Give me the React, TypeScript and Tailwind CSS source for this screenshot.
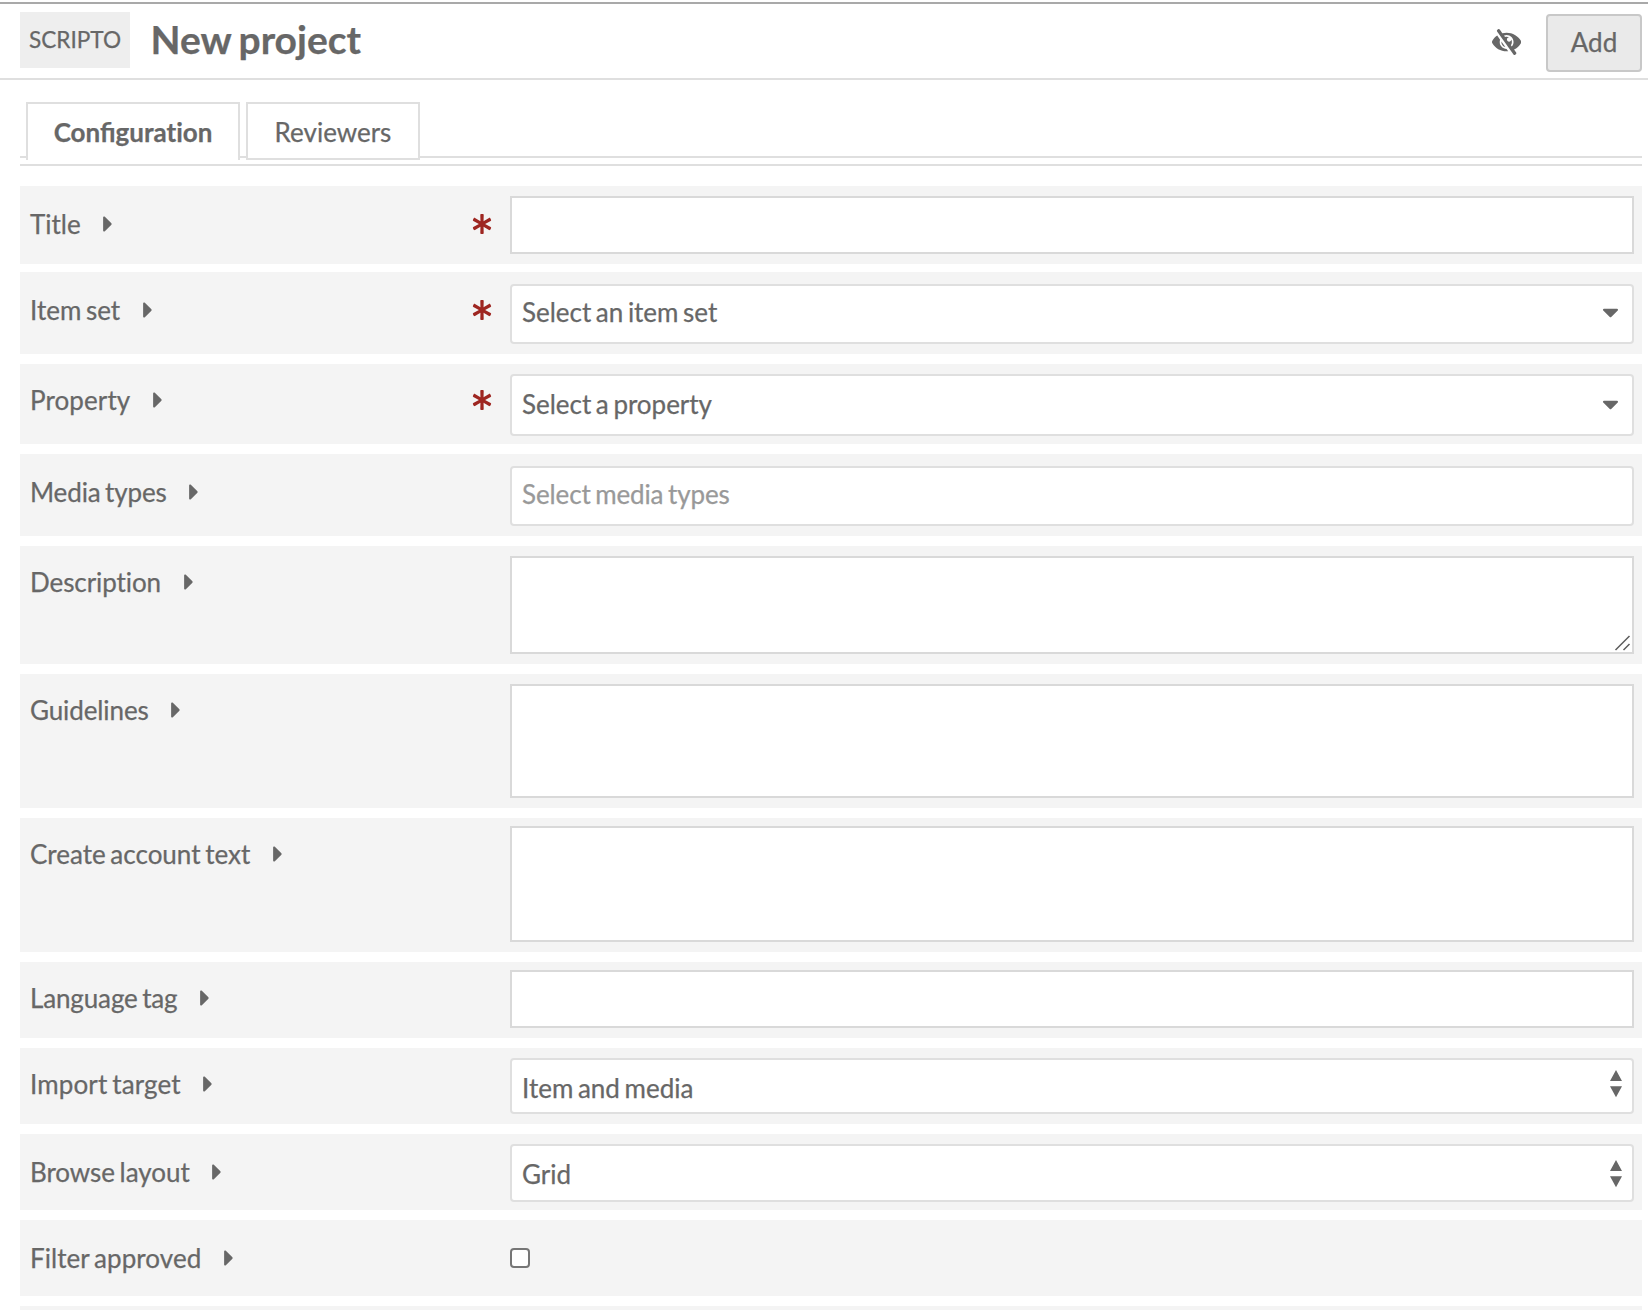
import React from "react";
import { FaAsterisk, FaCaretDown, FaCaretRight } from "react-icons/fa";

type Row = {
  label: string;
  required?: boolean;
  row: string;
  labelPad: string;
  tracking?: string;
  control: React.ReactNode;
};

function TextBox({ className, resizable }: { className: string; resizable?: boolean }) {
  return (
    <div className={`flex w-full items-end justify-end border-2 border-[#d9d9d9] bg-white ${className}`}>
      {resizable && (
        <svg width="18" height="18" viewBox="0 0 18 18" className="text-[#5c5c5c]" fill="none" stroke="currentColor" strokeWidth="1.5">
          <path d="M1.5 16 15.5 2M9.5 16 15.5 10" />
        </svg>
      )}
    </div>
  );
}

function Chosen({ text, className, arrow, muted }: { text: string; className: string; arrow?: boolean; muted?: boolean }) {
  return (
    <div className={`flex w-full items-start justify-between rounded-[4px] border-2 border-[#dfdfdf] bg-white pl-[10px] pr-[13px] ${className}`}>
      <span className={muted ? "tracking-[-0.12px] text-[#999]" : "tracking-[-0.02px]"}>{text}</span>
      {arrow && <FaCaretDown className="mt-[3px] h-[26px] w-[17px]" />}
    </div>
  );
}

function NativeSelect({ text, className, arrowPad }: { text: string; className: string; arrowPad: string }) {
  return (
    <div className={`flex w-full items-start justify-between rounded-[4px] border-2 border-[#dfdfdf] bg-white pl-[10px] pr-[10px] ${className}`}>
      <span>{text}</span>
      <span className={arrowPad}>
        <svg width="12" height="28" viewBox="0 0 12 28" fill="currentColor">
          <path d="M6 0 12 11H0ZM0 16.3H12L6 27.3Z" />
        </svg>
      </span>
    </div>
  );
}

const rows: Row[] = [
  { label: "Title", required: true, row: "h-[78px] pt-[10px]", labelPad: "mt-[12px]", control: <TextBox className="h-[58px]" /> },
  { label: "Item set", required: true, row: "mt-[8px] h-[82px] pt-[12px]", labelPad: "mt-[10px]", control: <Chosen className="h-[60px] pt-[10px]" text="Select an item set" arrow /> },
  { label: "Property", required: true, row: "mt-[10px] h-[80px] pt-[10px]", labelPad: "mt-[10px]", tracking: "tracking-[0.1px]", control: <Chosen className="h-[62px] pt-[12px]" text="Select a property" arrow /> },
  { label: "Media types", row: "mt-[10px] h-[82px] pt-[12px]", labelPad: "mt-[10px]", tracking: "tracking-[-0.13px]", control: <Chosen className="h-[60px] pt-[10px]" text="Select media types" muted /> },
  { label: "Description", row: "mt-[10px] h-[118px] pt-[10px]", labelPad: "mt-[10px]", tracking: "tracking-[-0.08px]", control: <TextBox className="h-[98px]" resizable /> },
  { label: "Guidelines", row: "mt-[10px] h-[134px] pt-[10px]", labelPad: "mt-[10px]", tracking: "tracking-[-0.1px]", control: <TextBox className="h-[114px]" /> },
  { label: "Create account text", row: "mt-[10px] h-[134px] pt-[8px]", labelPad: "mt-[12px]", control: <TextBox className="h-[116px]" /> },
  { label: "Language tag", row: "mt-[10px] h-[76px] pt-[8px]", labelPad: "mt-[12px]", tracking: "tracking-[-0.14px]", control: <TextBox className="h-[58px]" /> },
  { label: "Import target", row: "mt-[10px] h-[76px] pt-[10px]", labelPad: "mt-[10px]", tracking: "tracking-[0.14px]", control: <NativeSelect className="h-[56px] pt-[12px]" arrowPad="-mt-[2px]" text="Item and media" /> },
  { label: "Browse layout", row: "mt-[10px] h-[76px] pt-[10px]", labelPad: "mt-[12px]", tracking: "tracking-[-0.05px]", control: <NativeSelect className="h-[58px] pt-[12px]" arrowPad="mt-[2px]" text="Grid" /> },
  { label: "Filter approved", row: "mt-[10px] h-[76px] pt-[10px]", labelPad: "mt-[12px]", tracking: "tracking-[0.07px]", control: <div className="mt-[18px] size-[20px] rounded-[4px] border-2 border-[#767676] bg-white" /> },
];

function FieldRow({ field }: { field: Row }) {
  return (
    <div className={`flex shrink-0 items-start bg-[#f4f4f4] pl-[10px] pr-[8px] ${field.row}`}>
      <div className={`flex w-[480px] shrink-0 items-center pr-[18px] ${field.labelPad}`}>
        <span className={field.tracking}>{field.label}</span>
        <FaCaretRight className="ml-[22.5px] h-[26px] w-[10px]" />
        {field.required && <FaAsterisk className="ml-auto size-[20px] text-[#9e2621]" />}
      </div>
      <div className="min-w-0 flex-1">{field.control}</div>
    </div>
  );
}

function HiddenEye() {
  return (
    <svg width="29.25" height="26" viewBox="0 0 576 512" fill="currentColor">
      <path d="M286.693 391.984l32.579 46.542A333.958 333.958 0 0 1 288 440C168.19 440 63.44 376.63 6.646 280.369a47.999 47.999 0 0 1 0-48.739c24.023-40.766 56.913-75.775 96.024-102.537l57.077 81.539C154.736 224.82 152 240.087 152 256c0 74.736 60.135 135.282 134.693 135.984zm282.661-111.615c-31.667 53.737-78.747 97.46-135.175 125.475l.011.015 41.47 59.2c7.6 10.86 4.96 25.82-5.9 33.42l-13.11 9.18c-10.86 7.6-25.82 4.96-33.42-5.9L100.34 46.94c-7.6-10.86-4.96-25.82 5.9-33.42l13.11-9.18c10.86-7.6 25.82-4.96 33.42 5.9l51.038 72.617C230.68 75.776 258.905 72 288 72c119.81 0 224.56 63.37 281.354 159.631a48.002 48.002 0 0 1 0 48.738zM424 256c0-75.174-60.838-136-136-136-17.939 0-35.056 3.473-50.729 9.772l19.299 27.058c25.869-8.171 55.044-6.163 80.4 7.41h-.03c-23.65 0-42.82 19.17-42.82 42.82 0 23.626 19.147 42.82 42.82 42.82 23.65 0 42.82-19.17 42.82-42.82v-.03c18.462 34.49 16.312 77.914-8.25 110.95v.01l19.314 27.061C411.496 321.2 424 290.074 424 256zM262.014 356.727l-77.53-110.757c-5.014 52.387 29.314 98.354 77.53 110.757z" />
    </svg>
  );
}

export default function App() {
  return (
    <div className="flex h-[1310px] w-[1648px] flex-col overflow-hidden bg-white pt-[2px] font-['Lato',sans-serif] text-[26px] leading-[32px] text-[#676767] [font-variant-ligatures:none] [word-spacing:-2px] [-webkit-text-stroke:0.25px]">
      <header className="flex h-[78px] shrink-0 items-start border-t-2 border-b-2 border-t-[#a9a9a9] border-b-[#dfdfdf] pl-[20px] pr-[6px]">
        <div className="mt-[8px] flex h-[56px] w-[110px] items-center justify-center bg-[#eee] text-[22.6px]">SCRIPTO</div>
        <h1 className="ml-[20.5px] mt-[11px] text-[39px] font-bold leading-[48px]">New project</h1>
        <div className="ml-auto mr-[25px] mt-[25px]">
          <HiddenEye />
        </div>
        <button className="mt-[10px] flex h-[58px] w-[96px] justify-center rounded-[4px] border-2 border-[#c8c8c8] bg-[#eaeaea] pt-[10px]">Add</button>
      </header>

      <main className="flex shrink-0 flex-col pl-[20px] pr-[6px] pt-[22px]">
        <nav className="flex h-[56px] items-start gap-[6px] border-b-2 border-[#dfdfdf] pl-[6px]">
          <div className="flex h-[58px] w-[214px] shrink-0 justify-center border-2 border-b-0 border-[#dfdfdf] bg-white pt-[12px] font-bold">
            <span>
              <span className="[font-variant-ligatures:normal]">Confi</span>guration
            </span>
          </div>
          <div className="flex h-[58px] w-[174px] shrink-0 justify-center border-2 border-[#dfdfdf] bg-white pt-[12px]">Reviewers</div>
        </nav>
        <div className="mb-[20px] mt-[6px] h-[2px] bg-[#dfdfdf]" />
        {rows.map((field) => (
          <FieldRow key={field.label} field={field} />
        ))}
        <div className="mt-[10px] h-[76px] bg-[#f4f4f4]" />
      </main>
    </div>
  );
}
